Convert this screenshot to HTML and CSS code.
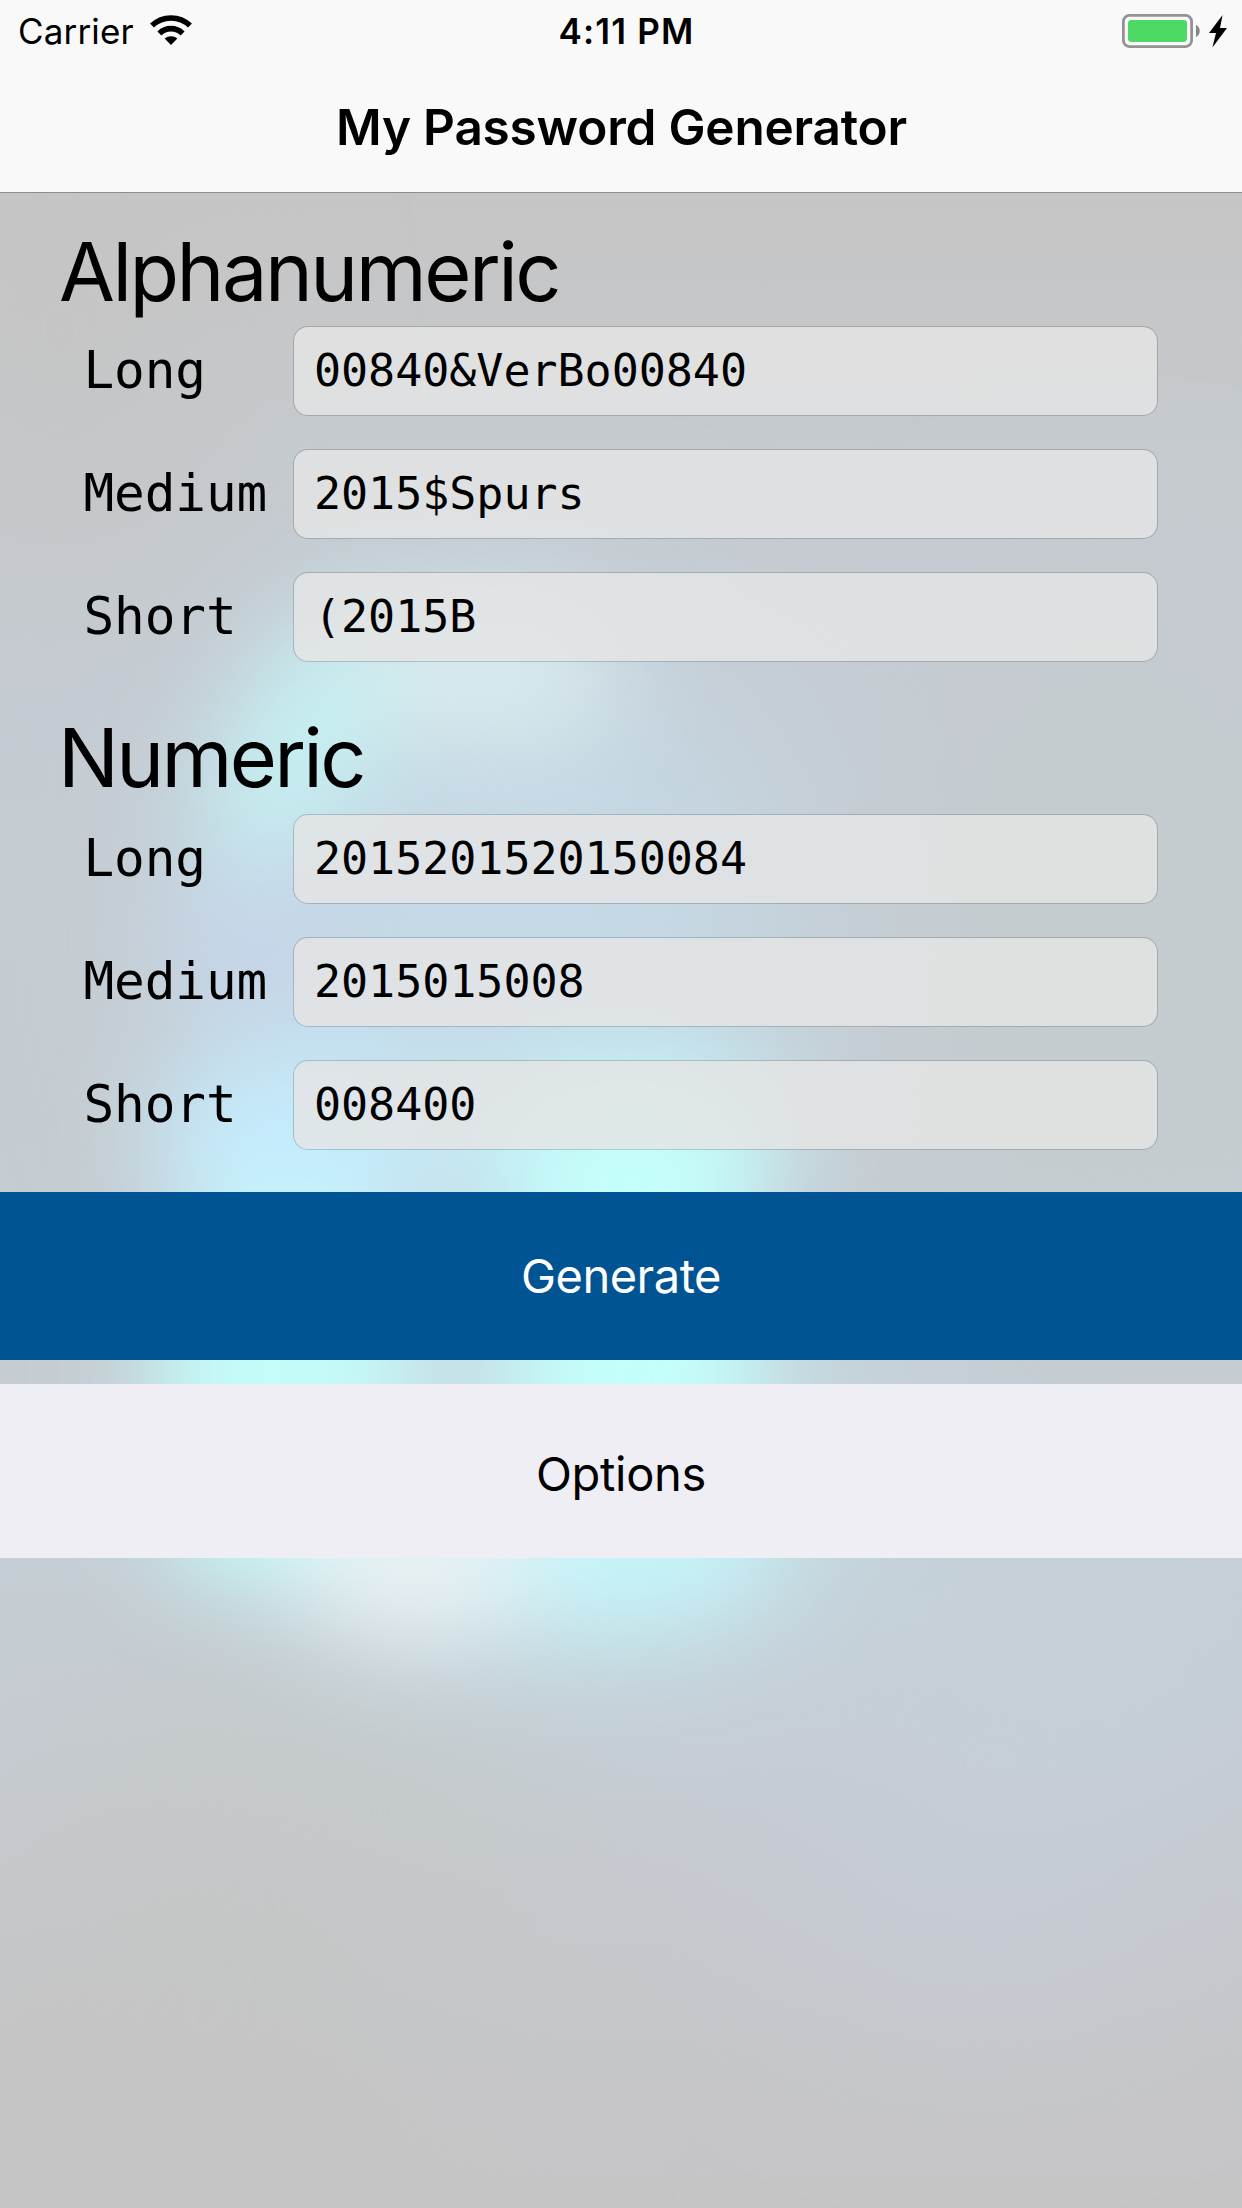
FILE: index.html
```
<!DOCTYPE html>
<html lang="en">
<head>
<meta charset="utf-8">
<title>My Password Generator</title>
<link rel="stylesheet" href="styles.css">
</head>
<body>
<div class="app">
  <svg class="backdrop" viewBox="0 0 1242 2208" width="1242" height="2208" aria-hidden="true">
    <defs>
      <filter id="soft" x="-100%" y="-100%" width="300%" height="300%"><feGaussianBlur stdDeviation="48"/></filter>
      <filter id="wide" x="-100%" y="-100%" width="300%" height="300%"><feGaussianBlur stdDeviation="100"/></filter>
    </defs>
    <g filter="url(#wide)">
      <ellipse cx="500" cy="940" rx="290" ry="320" fill="#c5d9e6"/>
      <ellipse cx="560" cy="1460" rx="320" ry="210" fill="#c5dde6"/>
      <ellipse cx="300" cy="1810" rx="270" ry="140" fill="#c5c9c9"/>
      <ellipse cx="160" cy="2080" rx="300" ry="180" fill="#c5c5c5"/>
      <ellipse cx="980" cy="1780" rx="220" ry="220" fill="#c6ccd6"/>
      <ellipse cx="1080" cy="1640" rx="190" ry="100" fill="#c5d2d8"/>
      <ellipse cx="1120" cy="880" rx="120" ry="300" fill="#c5ccce"/>
      <ellipse cx="60" cy="330" rx="130" ry="240" fill="#c5c5c5"/>
    </g>
    <g filter="url(#soft)">
      <ellipse cx="310" cy="735" rx="72" ry="150" transform="rotate(32 310 735)" fill="#c5f0f3"/>
      <ellipse cx="490" cy="675" rx="130" ry="68" fill="#daecee"/>
      <ellipse cx="255" cy="940" rx="80" ry="80" fill="#c6d6ea"/>
      <ellipse cx="310" cy="1140" rx="160" ry="95" fill="#c5ebfd"/>
      <ellipse cx="630" cy="1130" rx="160" ry="80" fill="#c4f3f9"/>
      <rect x="160" y="1210" width="240" height="370" rx="90" fill="#c4fcf9"/>
      <rect x="520" y="1110" width="230" height="380" rx="80" fill="#c4fffb"/>
      <ellipse cx="448" cy="1280" rx="62" ry="140" fill="#c6dde5"/>
      <ellipse cx="600" cy="1540" rx="180" ry="90" fill="#c5f4f9"/>
      <ellipse cx="415" cy="1565" rx="120" ry="75" fill="#e9f2f4"/>
    </g>
  </svg>
  <header class="topbar">
    <div class="status">
      <div class="status-left">
        <span class="carrier">Carrier</span>
        <svg class="wifi" viewBox="0 0 42 30" width="42" height="30" aria-hidden="true">
          <g fill="none" stroke="#000" stroke-width="5.6">
            <path d="M2 10.6A27.5 27.5 0 0 1 40 10.6"/>
            <path d="M9.4 18.4A16.6 16.6 0 0 1 32.6 18.4"/>
          </g>
          <path d="M21 30L14.6 23.6A9.6 9.6 0 0 1 27.4 23.6Z"/>
        </svg>
      </div>
      <span class="time">4:11 PM</span>
      <div class="status-right">
        <svg class="battery" viewBox="0 0 105 34" width="105" height="34" aria-hidden="true">
          <rect x="1.4" y="1.4" width="68.2" height="31.2" rx="6" fill="none" stroke="#939393" stroke-width="2.8"/>
          <rect x="6" y="6" width="59" height="22" rx="3.4" fill="#4cd964"/>
          <path d="M74 11C79 13 79 21 74 23Z" fill="#868686"/>
          <path d="M100.6 1L87 19H94L90.4 33.6L105 14H98Z" fill="#000"/>
        </svg>
      </div>
    </div>
    <h1 class="title">My Password Generator</h1>
  </header>
  <main class="content">
    <section class="group">
      <h2 class="heading">Alphanumeric</h2>
      <div class="row"><div class="label">Long</div><div class="field">00840&amp;VerBo00840</div></div>
      <div class="row"><div class="label">Medium</div><div class="field">2015$Spurs</div></div>
      <div class="row"><div class="label">Short</div><div class="field">(2015B</div></div>
    </section>
    <section class="group group-numeric">
      <h2 class="heading">Numeric</h2>
      <div class="row"><div class="label">Long</div><div class="field">2015201520150084</div></div>
      <div class="row"><div class="label">Medium</div><div class="field">2015015008</div></div>
      <div class="row"><div class="label">Short</div><div class="field">008400</div></div>
    </section>
    <div class="button generate">Generate</div>
    <div class="button options">Options</div>
  </main>
</div>
</body>
</html>
```
FILE: styles.css
```
* { box-sizing: border-box; }

body {
  margin: 0;
  font-family: Inter, "Liberation Sans", sans-serif;
  color: #000;
}

.app {
  position: relative;
  z-index: 0;
  display: flex;
  flex-direction: column;
  width: 1242px;
  height: 2208px;
  overflow: hidden;
  background: linear-gradient(180deg, #c5c5c5 193px, #c6c7c9 310px, #c5cace 430px, #c5cbd2 670px, #c5ccd1 1090px, #c5ced4 1570px, #c6cbd3 1750px, #c6c7cb 1990px, #c5c5c6 2208px);
}

.backdrop {
  position: absolute;
  inset: 0;
  z-index: -1;
}

.topbar {
  height: 193px;
  background: #f9f9f9;
  border-bottom: 1px solid #8c8c8c;
}

.status {
  display: grid;
  grid-template-columns: 1fr auto 1fr;
  height: 62px;
  line-height: 62px;
  padding: 0 15px 0 18px;
  font-size: 35px;
}

.status-left { display: flex; align-items: center; }
.carrier { width: 132px; letter-spacing: .15px; }
.wifi { margin-top: -2px; }
.time { margin-left: 8px; font-weight: 600; letter-spacing: 1.2px; }
.status-right { display: flex; align-items: center; justify-content: flex-end; }
.battery { margin-top: -1px; }

.title {
  margin: 0;
  padding-left: 1px;
  font-size: 49.5px;
  font-weight: 600;
  letter-spacing: -.2px;
  line-height: 130px;
  text-align: center;
}

.content { flex: 1; }

.heading {
  margin: 32px 0 7px 59px;
  font-size: 81px;
  font-weight: 400;
  letter-spacing: -2.5px;
  line-height: 94px;
}

.group { display: flow-root; }
.group-numeric .heading { margin: 49px 0 9px 58px; letter-spacing: -2.7px; }

.row {
  display: grid;
  grid-template-columns: 211px 865px;
  align-items: center;
  height: 90px;
  margin-left: 82px;
  font-family: "DejaVu Sans Mono", monospace;
}
.row + .row { margin-top: 33px; }

.label { padding-left: 1.5px; font-size: 51px; letter-spacing: -.1px; line-height: 90px; }

.field {
  height: 90px;
  padding-left: 20px;
  border: 1px solid rgba(60, 70, 75, .25);
  border-radius: 15px;
  background: rgba(229, 229, 229, .83);
  background-clip: padding-box;
  font-size: 45px;
  letter-spacing: -.03px;
  line-height: 88px;
}

.button {
  display: flex;
  align-items: center;
  justify-content: center;
  font-size: 47px;
  letter-spacing: -.5px;
}
.generate {
  height: 168px;
  margin-top: 42px;
  padding-bottom: 2px;
  background: #005493;
  color: #fff;
}
.options {
  height: 174px;
  margin-top: 24px;
  padding-top: 4px;
  background: #efeef4;
  letter-spacing: -.3px;
}
```
